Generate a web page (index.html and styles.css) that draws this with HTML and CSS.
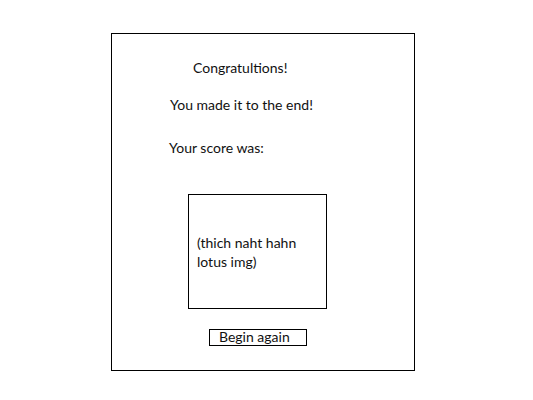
FILE: index.html
```html
<!DOCTYPE html>
<html>
<head>
<meta charset="utf-8">
<link rel="stylesheet" href="styles.css">
</head>
<body>
<div class="card">
  <div class="line congrats">Congratultions!</div>
  <div class="line made">You made it to the end!</div>
  <div class="line score">Your score was:</div>
  <div class="img-box">(thich naht hahn<br>lotus img)</div>
  <div class="btn">Begin again</div>
</div>
</body>
</html>
```
FILE: styles.css
```css
html, body {
  margin: 0;
  padding: 0;
  background: #ffffff;
}
body {
  font-family: Lato, "Open Sans", sans-serif;
  font-size: 14px;
  color: #111;
}
.card {
  margin: 33px 0 0 111px;
  width: 302px;
  height: 336px;
  border: 1px solid #000;
  display: flex;
  flex-direction: column;
  align-items: flex-start;
}
.line {
  line-height: 18px;
}
.congrats {
  margin: 25px 0 0 81px;
}
.made {
  margin: 19px 0 0 58px;
}
.score {
  margin: 25px 0 0 57px;
}
.img-box {
  margin: 37px 0 0 76px;
  width: 129px;
  height: 113px;
  padding-left: 8px;
  border: 1px solid #000;
  display: flex;
  align-items: center;
  line-height: 19px;
}
.btn {
  margin: 20px 0 0 97px;
  width: 87px;
  height: 13px;
  padding: 0 0 2px 9px;
  border: 1px solid #000;
  line-height: 13px;
}
```
